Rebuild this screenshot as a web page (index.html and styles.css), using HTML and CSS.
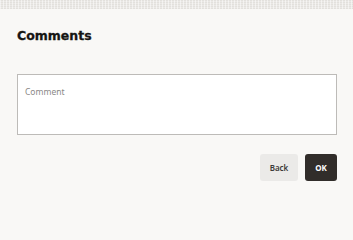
FILE: index.html
```html
<!DOCTYPE html>
<html>
<head>
<meta charset="utf-8">
<link rel="stylesheet" href="styles.css">
</head>
<body>
<div class="topbar"></div>
<main class="dialog">
  <h1 class="title">Comments</h1>
  <div class="field">
    <textarea class="comment" placeholder="Comment"></textarea>
  </div>
  <div class="actions">
    <button class="btn btn-secondary">Back</button>
    <button class="btn btn-primary">OK</button>
  </div>
</main>
</body>
</html>
```
FILE: styles.css
```css
html, body {
  margin: 0;
  padding: 0;
  background: #f9f8f6;
  font-family: Lato, "Noto Sans", sans-serif;
}
.topbar {
  height: 9px;
  background-color: #ebe9e6;
  background-image:
    repeating-linear-gradient(90deg, rgba(255,255,255,0.5) 0 1px, transparent 1px 3px),
    repeating-linear-gradient(0deg, rgba(210,208,204,0.35) 0 1px, transparent 1px 2px);
}
.dialog {
  padding: 0 16px 0 17px;
  display: flex;
  flex-direction: column;
}
.title {
  margin: 19px 0 0 0;
  font-family: "DejaVu Sans", sans-serif;
  font-size: 12.5px;
  font-weight: 700;
  color: #161513;
  line-height: 16px;
  letter-spacing: 0;
  -webkit-text-stroke: 0.3px #161513;
}
.field {
  margin-top: 30px;
  display: flex;
}
.comment {
  box-sizing: border-box;
  width: 100%;
  height: 61px;
  margin: 0;
  border: 1px solid #bdbbb8;
  border-radius: 0;
  background: #ffffff;
  padding: 11px 7px;
  font-family: "Noto Sans", sans-serif;
  font-size: 8.5px;
  resize: none;
  outline: none;
}
.comment::placeholder {
  color: #8a8886;
}
.actions {
  margin-top: 19px;
  display: flex;
  justify-content: flex-end;
  gap: 7px;
}
.btn {
  height: 27px;
  border: none;
  border-radius: 3px;
  font-family: "Noto Sans", sans-serif;
  font-size: 8px;
  font-weight: 600;
  padding: 0;
  cursor: pointer;
}
.btn-secondary {
  width: 38px;
  background: #ebeae8;
  color: #3c3a38;
}
.btn-primary {
  width: 32px;
  background: #312d2a;
  color: #ffffff;
  font-weight: 700;
}
```
